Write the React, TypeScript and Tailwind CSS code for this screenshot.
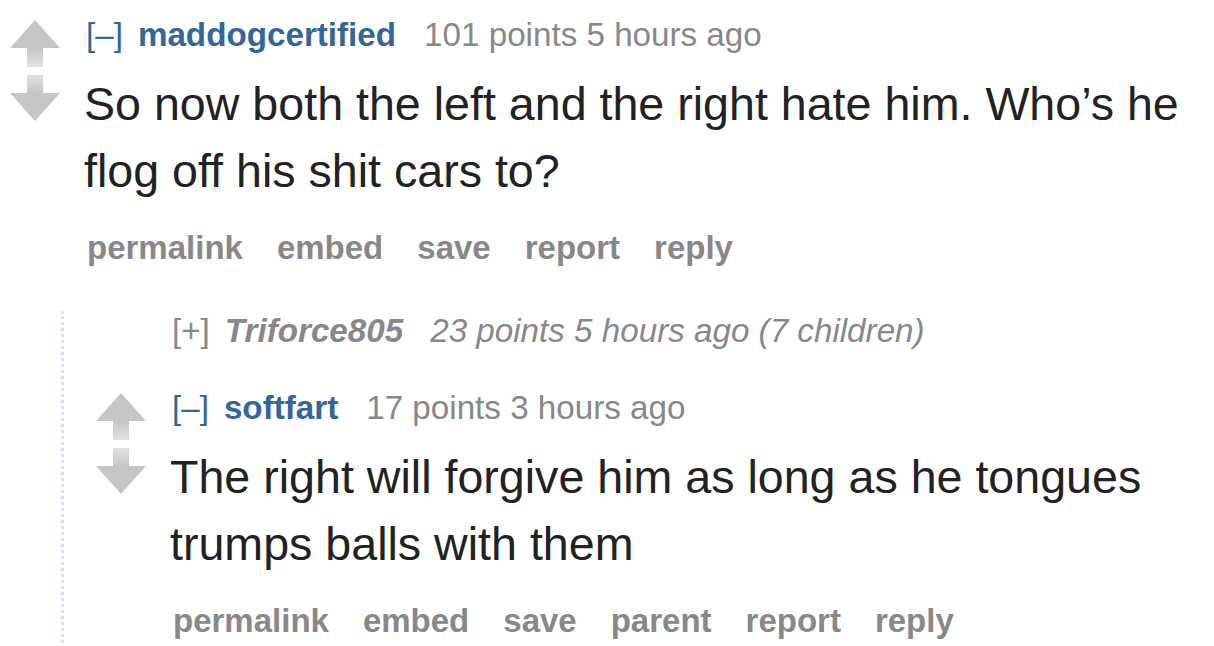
import React from "react";

type Btn = string;

function Arrows() {
  return (
    <div className="flex w-[50px] shrink-0 flex-col items-center pt-[5px]">
      <svg width="50" height="48" viewBox="0 0 50 48">
        <defs>
          <linearGradient id="upStem" x1="0" y1="0" x2="0" y2="1">
            <stop offset="0" stopColor="#c4c4c4" />
            <stop offset="1" stopColor="#e2e2e2" />
          </linearGradient>
        </defs>
        <polygon points="25,0 50,28 0,28" fill="#c6c6c6" />
        <rect x="17" y="27" width="16" height="20" fill="url(#upStem)" />
      </svg>
      <svg width="50" height="47" viewBox="0 0 50 47" className="mt-[7px]">
        <defs>
          <linearGradient id="downStem" x1="0" y1="0" x2="0" y2="1">
            <stop offset="0" stopColor="#e2e2e2" />
            <stop offset="1" stopColor="#c4c4c4" />
          </linearGradient>
        </defs>
        <rect x="17" y="0" width="16" height="19" fill="url(#downStem)" />
        <polygon points="0,18 50,18 25,46" fill="#c6c6c6" />
      </svg>
    </div>
  );
}

function Buttons({ items }: { items: Btn[] }) {
  return (
    <ul className="mt-[23px] flex h-[40px] items-center gap-[34px] pl-[3px] text-[33px] font-bold text-[#888]">
      {items.map((b) => (
        <li key={b}>{b}</li>
      ))}
    </ul>
  );
}

function Comment({
  author,
  meta,
  body,
  buttons,
}: {
  author: string;
  meta: string;
  body: string;
  buttons: Btn[];
}) {
  return (
    <div className="flex gap-[24px]">
      <Arrows />
      <div className="flex-1">
        <p className="flex h-[40px] items-center whitespace-nowrap pl-[2px] text-[33.2px] text-[#888]">
          <span className="mr-[15px] text-[#369]">[–]</span>
          <span className="mr-[28px] font-bold text-[#369]">{author}</span>
          <span>{meta}</span>
        </p>
        <div className="mt-[16px] text-[46.6px] leading-[67px] text-[#222]">{body}</div>
        <Buttons items={buttons} />
      </div>
    </div>
  );
}

export default function App() {
  return (
    <div
      className="h-[646px] w-[1214px] overflow-hidden bg-white pl-[10px] pt-[15px]"
      style={{ fontFamily: '"Liberation Sans", Arial, sans-serif' }}
    >
      <Comment
        author="maddogcertified"
        meta="101 points 5 hours ago"
        body="So now both the left and the right hate him. Who’s he flog off his shit cars to?"
        buttons={["permalink", "embed", "save", "report", "reply"]}
      />

      <div className="ml-[51px] mt-[43px] border-l-[3px] border-dotted border-[#ddf] pb-[20px] pl-[32px]">
        {/* collapsed child */}
        <div className="flex gap-[24px]">
          <div className="w-[50px] shrink-0" />
          <p className="flex h-[40px] items-center whitespace-nowrap pl-[2px] text-[33.2px] italic text-[#888]">
            <span className="mr-[15px] not-italic text-[#888]">[+]</span>
            <span className="mr-[27px] font-bold">Triforce805</span>
            <span>23 points 5 hours ago (7 children)</span>
          </p>
        </div>

        <div className="mt-[37px]">
          <Comment
            author="softfart"
            meta="17 points 3 hours ago"
            body="The right will forgive him as long as he tongues trumps balls with them"
            buttons={["permalink", "embed", "save", "parent", "report", "reply"]}
          />
        </div>
      </div>
    </div>
  );
}
